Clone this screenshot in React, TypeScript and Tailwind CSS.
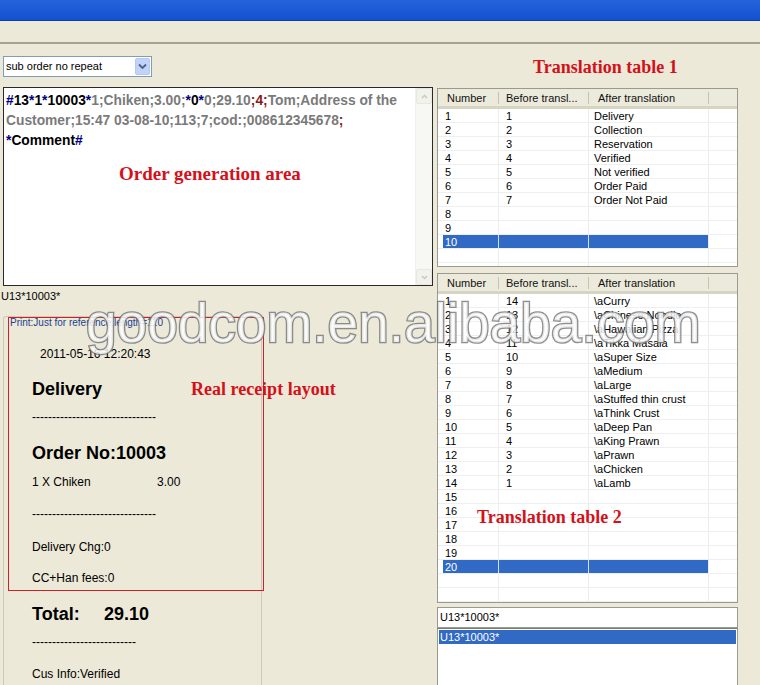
import React from "react";

const ui = "font-['Liberation_Sans',Arial,sans-serif]";
const serif = "font-['Liberation_Serif','Times_New_Roman',serif]";

const table1: [string, string, string][] = [
  ["1", "1", "Delivery"], ["2", "2", "Collection"], ["3", "3", "Reservation"],
  ["4", "4", "Verified"], ["5", "5", "Not verified"], ["6", "6", "Order Paid"],
  ["7", "7", "Order Not Paid"], ["8", "", ""], ["9", "", ""], ["10", "", ""],
  ["", "", ""], ["", "", ""],
];

const table2: [string, string, string][] = [
  ["1", "14", "\\aCurry"], ["2", "13", "\\aChinese Noodle"], ["3", "12", "\\aHawaiian Pizza"],
  ["4", "11", "\\aTikka Masala"], ["5", "10", "\\aSuper Size"], ["6", "9", "\\aMedium"],
  ["7", "8", "\\aLarge"], ["8", "7", "\\aStuffed thin crust"], ["9", "6", "\\aThink Crust"],
  ["10", "5", "\\aDeep Pan"], ["11", "4", "\\aKing Prawn"], ["12", "3", "\\aPrawn"],
  ["13", "2", "\\aChicken"], ["14", "1", "\\aLamb"], ["15", "", ""], ["16", "", ""],
  ["17", "", ""], ["18", "", ""], ["19", "", ""], ["20", "", ""], ["", "", ""], ["", "", ""],
];

function ListTable({ rows, selected, heightClass }: { rows: [string, string, string][]; selected: number; heightClass: string }) {
  return (
    <div className={`w-[301px] ${heightClass} overflow-hidden border border-[#9a9a92] bg-white text-[11px] text-black`}>
      <div className="flex h-[20px] bg-[#ebeadb] border-b-[3px] border-[#d8d4c4] text-[#111]">
        <div className="w-[61px] pl-[9px] pt-[2px] leading-[15px] relative">
          Number
          <span className="absolute right-0 top-[3px] h-[12px] w-px bg-[#c5c2b2]" />
        </div>
        <div className="w-[90px] pl-[7px] pt-[2px] leading-[15px] relative">
          Before transl...
          <span className="absolute right-0 top-[3px] h-[12px] w-px bg-[#c5c2b2]" />
        </div>
        <div className="w-[120px] pl-[9px] pt-[2px] leading-[15px] relative">
          After translation
          <span className="absolute right-0 top-[3px] h-[12px] w-px bg-[#c5c2b2]" />
        </div>
        <div className="flex-1" />
      </div>
      {rows.map((r, i) => {
        const sel = i === selected;
        return (
          <div key={i} className="flex h-[14px] leading-[14px] border-b border-[#efefef]">
            <div className="w-[5px]" />
            <div className={`w-[56px] pl-[2px] border-r ${sel ? "bg-[#316ac5] text-white border-[#cfe0f5]" : "border-[#ececec]"}`}>{r[0]}</div>
            <div className={`w-[90px] pl-[7px] border-r ${sel ? "bg-[#316ac5] text-white border-[#cfe0f5]" : "border-[#ececec]"}`}>{r[1]}</div>
            <div className={`w-[120px] pl-[5px] border-r border-[#ececec] whitespace-nowrap ${sel ? "bg-[#316ac5] text-white" : ""}`}>{r[2]}</div>
            <div className="flex-1" />
          </div>
        );
      })}
    </div>
  );
}

function Receipt() {
  return (
    <div className="relative mt-[13px] ml-[3px] w-[259px] h-[400px] border-l border-r border-t border-[#cdc9b8] rounded-tl-[3px] text-black">
      <div className="h-[12px] leading-[12px] pl-[6px] text-[10px] text-[#1b3f91]">Print:Just for reference,length=110</div>
      <div className="pl-[28px]">
        <div className="mt-[18px] h-[14px] leading-[14px] pl-[8px] text-[12px]">2011-05-16 12:20:43</div>
        <div className="mt-[17px] h-[22px] leading-[22px] text-[18px] font-bold">Delivery</div>
        <div className="mt-[10px] h-[14px] leading-[14px] text-[12px]">-------------------------------</div>
        <div className="mt-[18px] h-[22px] leading-[22px] text-[18px] font-bold">Order No:10003</div>
        <div className="mt-[11px] h-[14px] leading-[14px] text-[12px] flex">
          <span className="w-[125px]">1 X Chiken</span>
          <span>3.00</span>
        </div>
        <div className="mt-[18px] h-[14px] leading-[14px] text-[12px]">-------------------------------</div>
        <div className="mt-[19px] h-[14px] leading-[14px] text-[12px]">Delivery Chg:0</div>
        <div className="mt-[17px] h-[14px] leading-[14px] text-[12px]">CC+Han fees:0</div>
        <div className="mt-[18px] h-[22px] leading-[22px] text-[18px] font-bold flex">
          <span className="w-[72px]">Total:</span>
          <span>29.10</span>
        </div>
        <div className="mt-[10px] h-[14px] leading-[14px] text-[12px]">--------------------------</div>
        <div className="mt-[18px] h-[14px] leading-[14px] text-[12px]">Cus Info:Verified</div>
      </div>
    </div>
  );
}

export default function App() {
  const navy = "text-[#000080]";
  const blk = "text-black";
  const gry = "text-[#7a7a7a]";
  const red = "text-[#8b1a1a]";
  return (
    <div className={`relative w-[760px] h-[685px] overflow-hidden bg-[#ece9d8] ${ui}`}>
      <div className="h-[21px] bg-gradient-to-b from-[#2463dc] to-[#1450cf] border-b border-[#0b3fae]" />
      <div className="h-[23px] bg-[#ece9d8] border-b-2 border-[#a5a292]" />

      <div className="flex">
        {/* left column */}
        <div className="w-[434px]">
          <div className="mt-[12px] ml-[3px] flex h-[21px] w-[149px] border border-[#7f9db9] bg-white">
            <span className="flex-1 pl-[2px] text-[11px] leading-[19px] text-black">sub order no repeat</span>
            <span className="m-[1px] flex w-[15px] items-center justify-center rounded-[2px] bg-[#c1d3fb] border border-[#b4c8f6]">
              <svg width="9" height="7" viewBox="0 0 9 7"><path d="M1 1.5 L4.5 5 L8 1.5" stroke="#4d6185" strokeWidth="1.8" fill="none" /></svg>
            </span>
          </div>

          <div className="mt-[10px] ml-[3px] flex h-[199px] w-[430px] border border-[#2a2a2a] bg-white">
            <div className="flex-1 pl-[2px] pt-[3px] text-[13.8px] font-bold">
              <div className="h-[20px] leading-[20px] whitespace-nowrap">
                <span className={navy}>#</span><span className={blk}>13</span><span className={navy}>*</span><span className={blk}>1</span><span className={navy}>*</span><span className={blk}>10003</span><span className={navy}>*</span>
                <span className={gry}>1;Chiken;3.00;</span><span className={navy}>*</span><span className={blk}>0</span><span className={navy}>*</span>
                <span className={gry}>0;29.10</span><span className={red}>;4;</span><span className={gry}>Tom;Address of the</span>
              </div>
              <div className="h-[20px] leading-[20px] whitespace-nowrap">
                <span className={gry}>Customer;15:47 03-08-10;113;7;cod:;008612345678</span><span className={red}>;</span>
              </div>
              <div className="h-[20px] leading-[20px]">
                <span className={navy}>*</span><span className={blk}>Comment</span><span className={navy}>#</span>
              </div>
              <div className={`mt-[12px] h-[22px] leading-[22px] pl-[113px] text-[19px] text-[#d4101a] ${serif}`}>Order generation area</div>
            </div>
            <div className="flex w-[17px] flex-col justify-between bg-[#f7f7f3] border-l border-[#f0efe8]">
              <div className="flex h-[16px] items-center justify-center rounded-[2px] border border-[#e8e8e0] bg-[#f2f2ec]">
                <svg width="7" height="5" viewBox="0 0 7 5"><path d="M1 4 L3.5 1.5 L6 4" stroke="#c8c8c0" strokeWidth="1.4" fill="none" /></svg>
              </div>
              <div className="flex h-[16px] items-center justify-center rounded-[2px] border border-[#e8e8e0] bg-[#f2f2ec]">
                <svg width="7" height="5" viewBox="0 0 7 5"><path d="M1 1 L3.5 3.5 L6 1" stroke="#c8c8c0" strokeWidth="1.4" fill="none" /></svg>
              </div>
            </div>
          </div>

          <div className="mt-[3px] ml-[1px] h-[14px] leading-[14px] text-[11px] text-black">U13*10003*</div>

          <Receipt />
        </div>

        {/* right column */}
        <div className="ml-[3px] w-[301px]">
          <div className={`mt-[12px] ml-[96px] h-[22px] leading-[22px] text-[18px] font-bold text-[#d4101a] ${serif}`}>Translation table 1</div>
          <div className="mt-[10px]">
            <ListTable rows={table1} selected={9} heightClass="h-[179px]" />
          </div>
          <div className="relative mt-[6px]">
            <ListTable rows={table2} selected={19} heightClass="h-[330px]" />
            <div className={`absolute left-[40px] top-[233px] h-[22px] leading-[22px] text-[18px] font-bold text-[#d4101a] ${serif}`}>Translation table 2</div>
          </div>
          <div className="mt-[4px] h-[21px] border border-[#9a9a92] bg-white pl-[2px] text-[11px] leading-[19px] text-black">U13*10003*</div>
          <div className="h-[80px] border border-[#9a9a92] border-t-[#7d7d75] bg-white p-[1px]">
            <div className="h-[14px] bg-[#316ac5] pl-[1px] text-[11px] leading-[14px] text-white">U13*10003*</div>
          </div>
        </div>
      </div>

      {/* overlays */}
      <div className="absolute left-[8px] top-[317px] h-[274px] w-[256px] border border-[#d21e24]" />
      <div className={`absolute left-[191px] top-[378px] h-[22px] leading-[22px] text-[18px] font-bold text-[#d4101a] ${serif}`}>Real receipt layout</div>
      <div className="pointer-events-none absolute left-[86px] top-[296px] whitespace-nowrap text-[55px] leading-[55px] text-[rgba(255,255,255,0.8)] [-webkit-text-stroke:2.6px_rgba(115,115,115,0.8)] [paint-order:stroke_fill]">
        goodcom.en.alibaba.com
      </div>
    </div>
  );
}
